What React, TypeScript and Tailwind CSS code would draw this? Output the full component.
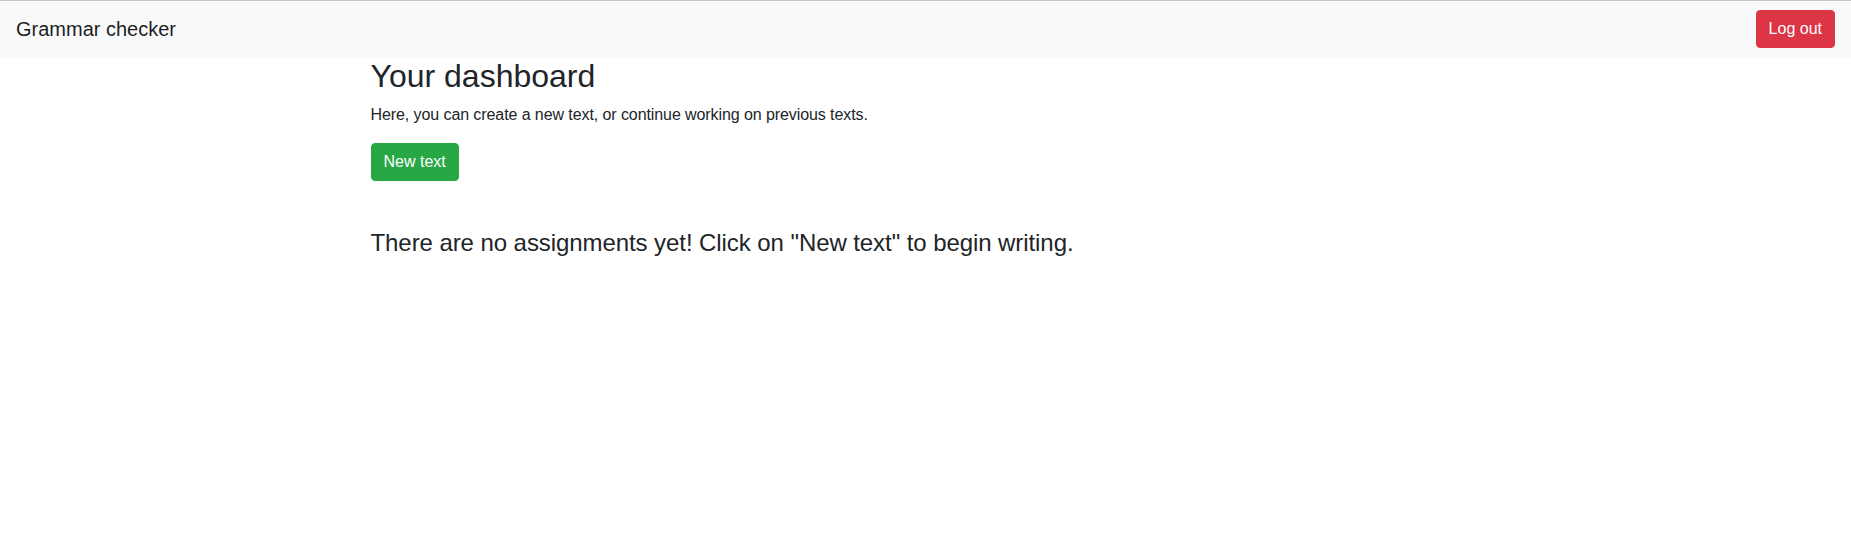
export default function App() {
  return (
    <div className="min-h-screen bg-white text-[#212529]" style={{ fontFamily: '"Liberation Sans", Arial, sans-serif' }}>
      <div className="h-px bg-[#c8c8c8]" />
      <nav className="flex items-center justify-between bg-[#f8f9fa] px-4 py-2">
        <span className="py-[5px] text-[20px] leading-[30px] text-[rgba(0,0,0,0.9)]">Grammar checker</span>
        <button className="rounded-[4px] border border-[#dc3545] bg-[#dc3545] px-3 py-[6px] text-[16px] leading-6 text-white">
          Log out
        </button>
      </nav>
      <main className="mx-auto w-[1140px] px-[15px]">
        <h2 className="mb-2 text-[32px] font-normal leading-[1.2]">Your dashboard</h2>
        <p className="mb-4 text-[16px] leading-6 tracking-[-0.085px]">Here, you can create a new text, or continue working on previous texts.</p>
        <button className="rounded-[4px] border border-[#28a745] bg-[#28a745] px-3 py-[6px] text-[16px] leading-6 text-white">
          New text
        </button>
        <h4 className="mt-12 text-[24px] font-normal leading-[1.2] tracking-[-0.075px]">
          There are no assignments yet! Click on "New text" to begin writing.
        </h4>
      </main>
    </div>
  );
}
